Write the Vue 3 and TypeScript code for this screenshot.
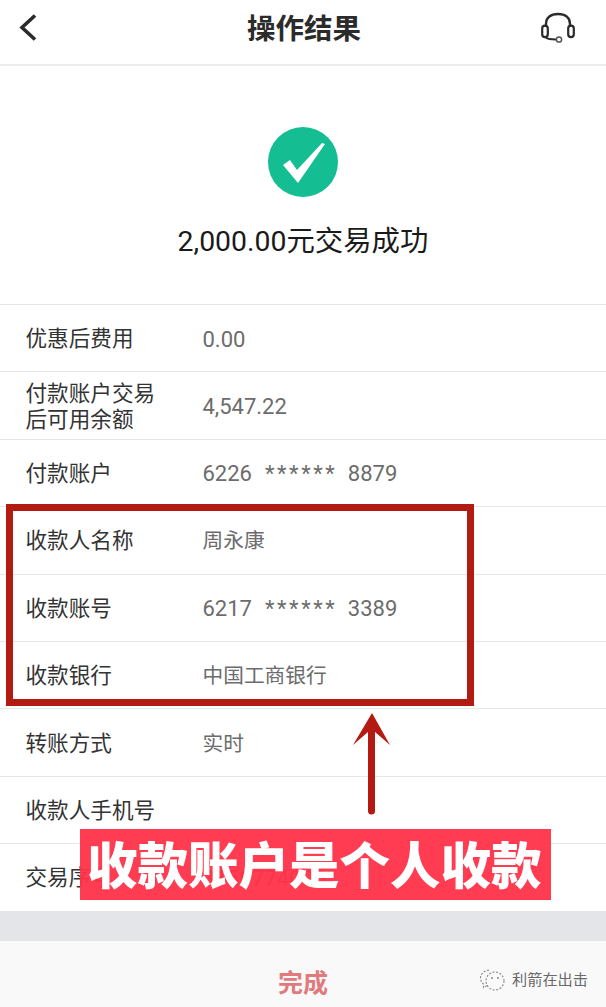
<script setup lang="ts">
const rows = [
  { label: ['优惠后费用'], value: '0.00' },
  { label: ['付款账户交易', '后可用余额'], value: '4,547.22' },
  { label: ['付款账户'], card: ['6226', '8879'] },
  { label: ['收款人名称'], text: '周永康' },
  { label: ['收款账号'], card: ['6217', '3389'] },
  { label: ['收款银行'], text: '中国工商银行' },
  { label: ['转账方式'], text: '实时' },
  { label: ['收款人手机号'] },
  { label: ['交易序号'], value: '3150774006' }
]
</script>

<template>
  <div class="page">
    <header class="topbar">
      <svg class="back" width="30" height="40" viewBox="0 0 30 40">
        <path d="M21 8.5 L8 20.5 L21 32.5" fill="none" stroke="#2b2b2b" stroke-width="3.6" />
      </svg>
      <h1>操作结果</h1>
      <svg class="headset" width="36" height="32" viewBox="0 0 36 32">
        <path d="M6 15 V12 C6 5.5 11 2 18 2 C25 2 30 5.5 30 12 V15" fill="none" stroke="#2b2b2b" stroke-width="2.4" />
        <rect x="2.2" y="13.6" width="5.6" height="11.5" rx="2.8" fill="none" stroke="#2b2b2b" stroke-width="2.2" />
        <rect x="28.2" y="13.6" width="5.6" height="11.5" rx="2.8" fill="none" stroke="#2b2b2b" stroke-width="2.2" />
        <path d="M5.5 25 C6.5 27 9 27.5 16 27.5" fill="none" stroke="#2b2b2b" stroke-width="2" />
        <circle cx="19" cy="27.5" r="2.6" fill="#fff" stroke="#555" stroke-width="1.5" />
      </svg>
    </header>

    <section class="result">
      <svg width="70" height="70" viewBox="0 0 70 70">
        <circle cx="35" cy="35" r="35" fill="#14bd92" />
        <path d="M15 38 L22 33 L29 43 L54 16 L57 17 L30 56 Z" fill="#fff" />
      </svg>
      <p>2,000.00元交易成功</p>
    </section>

    <ul class="rows">
      <li v-for="row in rows" :key="row.label[0]" class="row">
        <div class="label">
          <div v-for="line in row.label" :key="line">{{ line }}</div>
        </div>
        <div v-if="row.card" class="value card">
          <span>{{ row.card[0] }}</span>
          <span class="stars">******</span>
          <span>{{ row.card[1] }}</span>
        </div>
        <div v-else-if="row.text" class="text">{{ row.text }}</div>
        <div v-else class="value">{{ row.value }}</div>
      </li>
    </ul>

    <div class="gap"></div>
    <footer class="bottom">完成</footer>

    <div class="mark-box"></div>
    <svg class="mark-arrow" width="40" height="104" viewBox="0 0 40 104">
      <path d="M19 0 L37 32 L22 19 V98 A3.5 3.5 0 0 1 15 98 V19 L0 32 Z" fill="#b31b12" />
    </svg>
    <div class="mark-banner">收款账户是个人收款</div>

    <div class="watermark">
      <svg width="28" height="24" viewBox="0 0 28 24">
        <path d="M11 2 C5 3 2 7 2.5 11 C3 14 4.5 15 6 16.5 L5.5 19.5 L9 17.8" fill="none" stroke="#888" stroke-width="1.1" stroke-dasharray="2 1.6" />
        <circle cx="17" cy="13" r="9" fill="none" stroke="#888" stroke-width="1.1" stroke-dasharray="2 1.6" />
        <circle cx="14" cy="10" r="1" fill="#888" />
        <circle cx="20" cy="10" r="1" fill="#888" />
      </svg>
      <span>利箭在出击</span>
    </div>
  </div>
</template>

<style>
html,
body {
  margin: 0;
  background: #fff;
}
</style>

<style scoped>
.page {
  position: relative;
  width: 606px;
  height: 1007px;
  overflow: hidden;
  background: #fff;
  font-family: Roboto, "Noto Sans CJK SC", sans-serif;
}

.topbar {
  display: grid;
  grid-template-columns: 1fr auto 1fr;
  align-items: center;
  box-sizing: border-box;
  height: 66px;
  padding: 0 12px 11px 14px;
  border-bottom: 2px solid #ececec;
}

.topbar h1 {
  margin: 0;
  font-size: 28.5px;
  font-weight: 700;
  color: #2b2b2b;
}

.headset {
  justify-self: end;
  margin: 3px 18px 0 0;
}

.result {
  display: flex;
  flex-direction: column;
  align-items: center;
  box-sizing: border-box;
  height: 238px;
  padding-top: 61px;
}

.result svg {
  display: block;
}

.result p {
  margin: 25px 0 0;
  font-size: 28.4px;
  line-height: 40px;
  color: #1a1a1a;
}

.rows {
  margin: 0;
  padding: 0;
  list-style: none;
}

.row {
  display: flex;
  align-items: center;
  box-sizing: border-box;
  height: 67.4px;
  padding: 2px 0 0 25.5px;
  border-top: 1px solid #e6e6e8;
}

.label {
  width: 177px;
  flex: none;
  font-size: 21.6px;
  line-height: 26px;
  color: #333;
}

.value {
  font-size: 22px;
  color: #6c6c6c;
  white-space: pre;
}

.card {
  display: flex;
  gap: 13px;
}

.stars {
  letter-spacing: 2.6px;
  margin-right: -2.6px;
}

.text {
  font-size: 20.7px;
  line-height: 26px;
  color: #6c6c6c;
}

.gap {
  height: 30px;
  background: #e4e5e8;
}

.bottom {
  height: 66px;
  box-sizing: border-box;
  padding-top: 25px;
  text-align: center;
  font-size: 25px;
  line-height: 36px;
  font-weight: 700;
  color: #e07a7c;
  background: #f9f9f9;
}

.mark-box {
  position: absolute;
  left: 6px;
  top: 504px;
  box-sizing: border-box;
  width: 468px;
  height: 202px;
  border: 7px solid #b31b12;
}

.mark-arrow {
  position: absolute;
  left: 353px;
  top: 713px;
}

.mark-banner {
  position: absolute;
  left: 80px;
  top: 829px;
  box-sizing: border-box;
  width: 471px;
  height: 71px;
  padding-left: 7px;
  background: rgba(255, 50, 72, 0.95);
  color: #fff;
  font-family: "Noto Sans CJK SC", sans-serif;
  font-size: 50.5px;
  line-height: 66px;
  font-weight: 900;
  white-space: nowrap;
}

.watermark {
  position: absolute;
  left: 478px;
  top: 968px;
  display: flex;
  align-items: center;
  gap: 6px;
  font-size: 15.2px;
  line-height: 24px;
  color: #6a6a6a;
}
</style>
